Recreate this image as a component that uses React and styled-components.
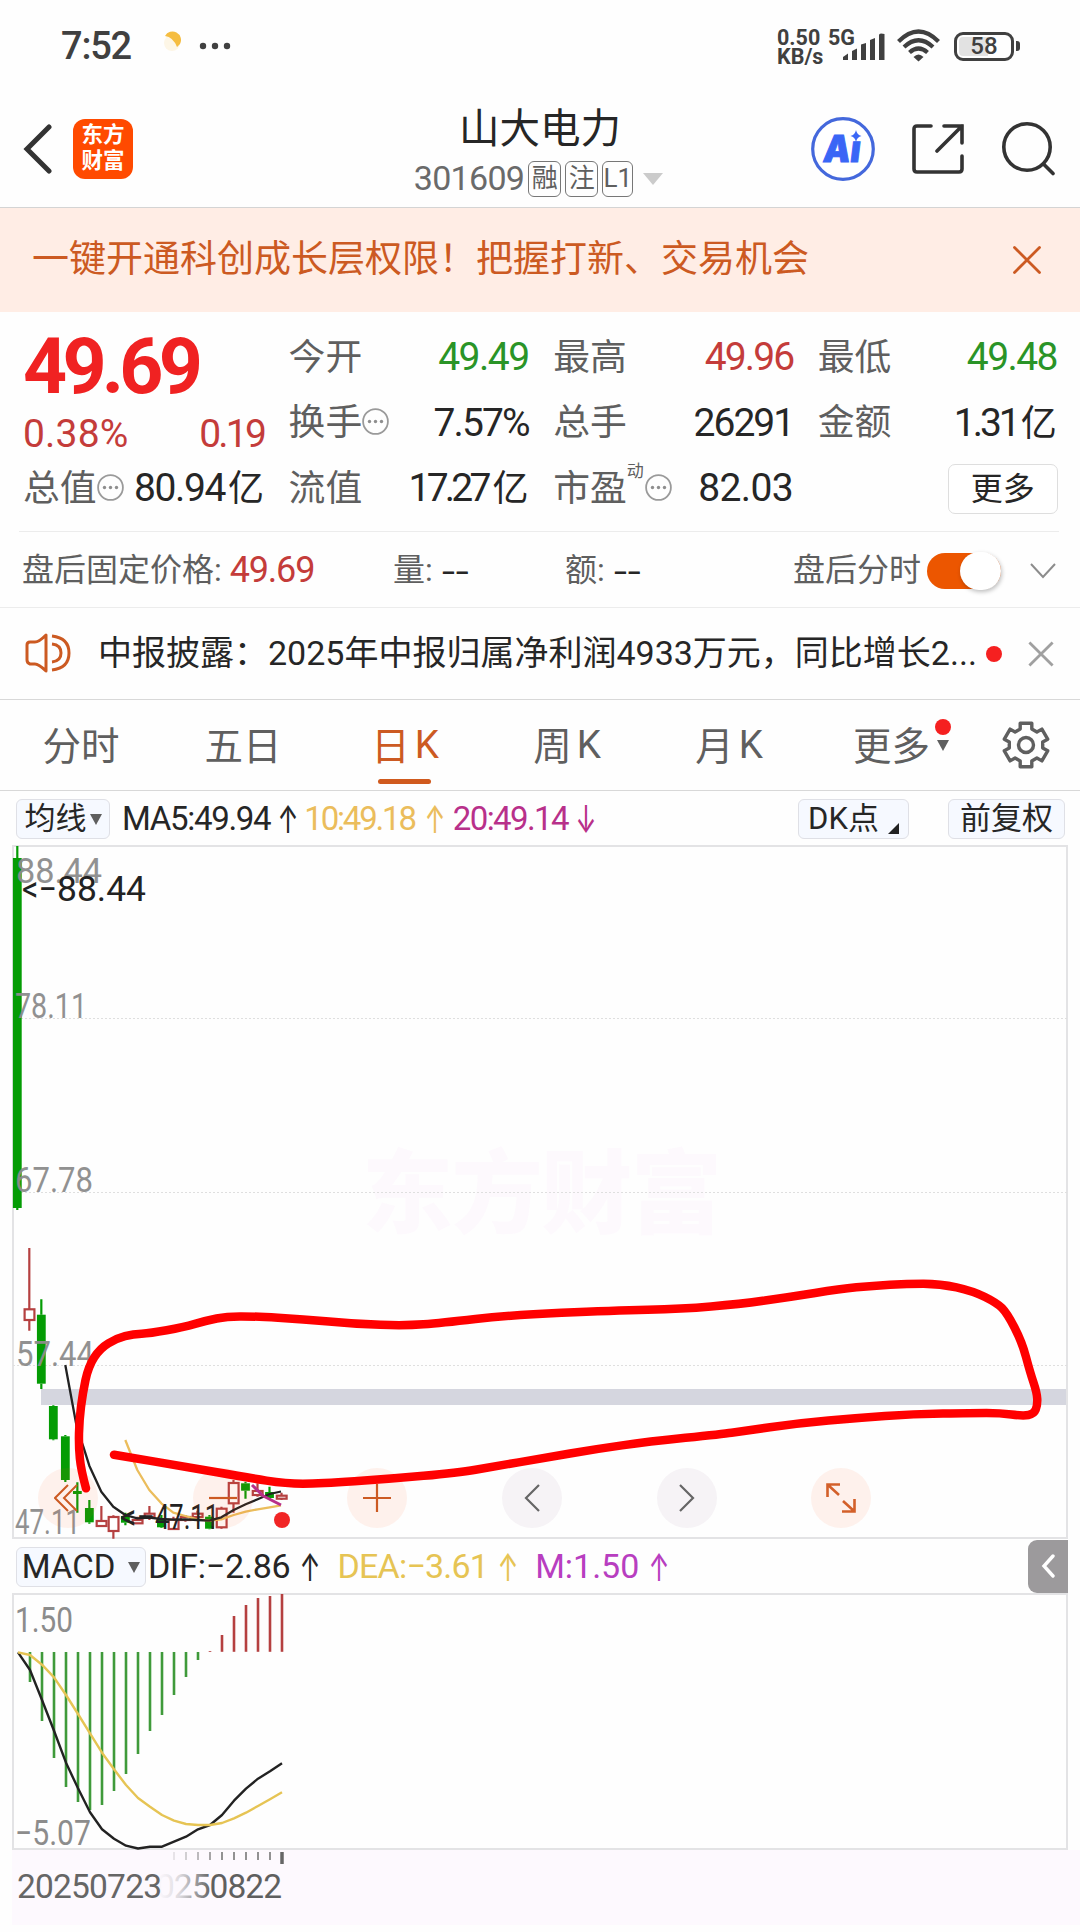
import React from 'react'
import styled, { createGlobalStyle } from 'styled-components';

const GlobalStyle = createGlobalStyle`
  * {
    box-sizing: border-box;
  }
  body {
    margin: 0;
    background: #fefefe;
    color: #262626;
    font-family: Roboto, "Noto Sans CJK SC", sans-serif;
  }
  svg {
    display: block;
    flex: none;
  }
`;

const Page = styled.div`
  width: 1080px;
  height: 1932px;
  overflow: hidden;
  display: flex;
  flex-direction: column;
`;

const Text = styled.span`
  display: block;
  flex: none;
  white-space: nowrap;
  line-height: 1.1;
  font-size: ${(p) => p.$size || 37}px;
  color: ${(p) => p.$color || '#262626'};
  font-weight: ${(p) => p.$weight || 400};
  letter-spacing: ${(p) => p.$ls || 0}px;
  margin-left: ${(p) => p.$ml || 0}px;
`;

/* status bar */

const StatusBar = styled.div`
  flex: none;
  height: 92px;
  padding: 0 60px 0 61px;
  display: flex;
  align-items: center;
`;

const Speed = styled.div`
  margin-left: auto;
  width: 51px;
  font-size: 21.5px;
  line-height: 19px;
  font-weight: 700;
  color: #404040;
  white-space: nowrap;
  padding-top: 1px;
`;

const Signal = styled.div`
  position: relative;
  width: 69px;
  height: 36px;
`;

const Network = styled.span`
  position: absolute;
  left: 0;
  top: 0;
  font-size: 21.5px;
  line-height: 19px;
  font-weight: 700;
  color: #404040;
`;

const Bars = styled.svg`
  position: absolute;
  left: 15px;
  top: 5px;
`;

const Battery = styled.div`
  width: 60px;
  height: 29px;
  margin-left: 14px;
  border: 3px solid #404040;
  border-radius: 9px;
  display: flex;
  align-items: center;
  justify-content: center;
  font-size: 24px;
  font-weight: 500;
  color: #404040;
  background: linear-gradient(90deg, #e2e2e2 58%, #fefefe 58%);
  background-clip: content-box;
  padding: 2px;
`;

const BatteryTip = styled.div`
  width: 4px;
  height: 10px;
  margin-left: 2px;
  border-radius: 0 3px 3px 0;
  background: #404040;
`;

/* header */

const Header = styled.div`
  flex: none;
  height: 116px;
  padding: 0 25px 0 23px;
  border-bottom: 1px solid #d4d4d4;
  display: flex;
  align-items: flex-start;
`;

const Logo = styled.div`
  width: 60px;
  height: 60px;
  margin: 27px 0 0 21px;
  border-radius: 12px;
  background: #ff4a00;
  color: #fff;
  font-size: 21.5px;
  font-weight: 700;
  line-height: 26px;
  text-align: center;
  padding-top: 3px;
`;

const TitleBox = styled.div`
  width: 280px;
  margin-left: 267px;
  display: flex;
  flex-direction: column;
  align-items: center;
  padding-top: 15px;
`;

const CodeRow = styled.div`
  display: flex;
  align-items: center;
  gap: 4px;
  margin-top: 9px;
  margin-left: -3px;
  height: 36px;
`;

const Tag = styled.span`
  width: ${(p) => p.$w || 33}px;
  height: 36px;
  border: 1.5px solid #777;
  border-radius: 6px;
  font-size: 26px;
  line-height: 33px;
  text-align: center;
  color: #5f5f5f;
  display: flex;
  justify-content: center;
`;

const Down = styled.i`
  display: block;
  flex: none;
  border-left: ${(p) => p.$w / 2}px solid transparent;
  border-right: ${(p) => p.$w / 2}px solid transparent;
  border-top: ${(p) => p.$h}px solid ${(p) => p.$color};
  margin-left: ${(p) => p.$ml || 0}px;
`;

const HeaderIcons = styled.div`
  margin-left: auto;
  padding-top: 24px;
  display: flex;
  align-items: center;
`;

/* banner */

const Banner = styled.div`
  flex: none;
  height: 104px;
  padding: 0 39px 0 32px;
  background: #ffede5;
  display: flex;
  align-items: center;
  justify-content: space-between;
`;

/* quote */

const Quote = styled.div`
  flex: none;
  height: 220px;
  margin: 0 21px 0 19px;
  padding: 13px 2px 0 4px;
  border-bottom: 1.5px solid #ececec;
  display: grid;
  grid-template-columns: 241px 240px 240px 239px;
  column-gap: 24.6px;
  grid-template-rows: repeat(3, 65.5px);
`;

const PriceCell = styled.div`
  grid-row: 1 / span 2;
  display: flex;
  flex-direction: column;
`;

const Cell = styled.div`
  display: flex;
  align-items: center;
  justify-content: space-between;
`;

const Label = styled.div`
  display: flex;
  align-items: center;
  font-size: 36.8px;
  line-height: 44px;
  color: #5f5f5f;
  white-space: nowrap;

  svg {
    margin-bottom: 3px;
  }
`;

const Sup = styled.sup`
  font-size: 17px;
  line-height: 17px;
  align-self: flex-start;
  margin: -4px 1px 0 0;
`;

const Unit = styled.span`
  font-size: 36px;
  letter-spacing: 0;
  margin-left: ${(p) => p.$ml || 3}px;
`;

const MoreButton = styled.button`
  width: 110px;
  height: 50px;
  margin: 0 -1px 0 auto;
  padding: 0;
  border: 1.5px solid #dedede;
  border-radius: 7px;
  background: #fff;
  font: 400 32px/44px Roboto, "Noto Sans CJK SC", sans-serif;
  color: #262626;
`;

/* after-hours row */

const AfterRow = styled.div`
  flex: none;
  height: 76px;
  padding: 2px 0 0 22px;
  border-bottom: 1.5px solid #ececec;
  display: grid;
  grid-template-columns: 371px 172px 228px 134px 103px auto;
  align-items: center;
`;

const Pair = styled.div`
  display: flex;
  align-items: center;
`;

const Dashes = styled.span`
  margin-left: 9px;
  font-size: 34px;
  line-height: 36px;
  letter-spacing: 0.5px;
  transform: scaleX(1.38);
  transform-origin: left;
`;

const Toggle = styled.div`
  width: 74px;
  height: 36px;
  border-radius: 18px;
  background: #ec5600;
  display: flex;
  align-items: center;
  justify-content: flex-end;
`;

const Knob = styled.div`
  width: 41px;
  height: 38px;
  border-radius: 20px;
  background: #fff;
  box-shadow: 1px 2px 4px rgba(0, 0, 0, 0.25);
`;

/* news */

const News = styled.div`
  flex: none;
  height: 92px;
  padding: 0 26px 0 25px;
  border-bottom: 1.5px solid #d8d8d8;
  display: flex;
  align-items: center;
`;

const Dot = styled.i`
  display: block;
  flex: none;
  width: 16px;
  height: 16px;
  border-radius: 50%;
  background: #f52020;
`;

/* tabs */

const Tabs = styled.div`
  flex: none;
  height: 91px;
  border-bottom: 1.5px solid #d8d8d8;
  display: grid;
  grid-template-columns: repeat(6, 162px) 108px;
`;

const Tab = styled.div`
  position: relative;
  display: flex;
  align-items: center;
  justify-content: center;
  gap: 5px;
  padding-bottom: 4px;
  font-size: 38.5px;
  color: ${(p) => (p.$on ? '#cc5a22' : '#5f5f5f')};

  &::after {
    content: '';
    display: ${(p) => (p.$on ? 'block' : 'none')};
    position: absolute;
    left: 54px;
    bottom: 6px;
    width: 53px;
    height: 5px;
    border-radius: 3px;
    background: #d05a1e;
  }
`;

const Latin = styled.span`
  padding-top: 3px;
`;

const TabMark = styled.div`
  display: flex;
  flex-direction: column;
  align-items: center;
  gap: 5px;
  margin: -16px -22px 0 0;
`;

/* indicator rows */

const IndicatorRow = styled.div`
  flex: none;
  height: ${(p) => p.$h}px;
  padding: 2px 15px 0 16px;
  display: flex;
  align-items: center;
`;

const Pick = styled.button`
  flex: none;
  width: ${(p) => p.$w}px;
  height: 40px;
  margin: 0 0 0 ${(p) => p.$ml || '0'};
  padding: 0;
  border: 1.5px solid #dfe0e6;
  border-radius: 6px;
  background: #f6f9ff;
  display: flex;
  align-items: center;
  justify-content: center;
  font: 400 ${(p) => p.$size || 31}px/36px Roboto, "Noto Sans CJK SC", sans-serif;
  color: #262626;
`;

const Corner = styled.i`
  display: block;
  border-left: 11px solid transparent;
  border-bottom: 11px solid #222;
  margin: 18px 0 0 9px;
`;

const Arrow = styled.span`
  flex: none;
  width: 18px;
  margin-left: ${(p) => p.$ml || 9}px;
  font-family: Inter, sans-serif;
  font-size: 34px;
  line-height: 36px;
  color: ${(p) => p.$color || '#262626'};
  display: flex;
  justify-content: center;
  transform: scale(0.74, 1.14);
`;

const Drawer = styled.div`
  width: 40px;
  height: 53px;
  margin: -2px -3px 0 auto;
  border-radius: 9px 0 0 9px;
  background: #9c9a9c;
  display: flex;
  align-items: center;
  justify-content: center;
`;

/* charts */

const ChartBox = styled.div`
  flex: none;
  position: relative;
  height: ${(p) => p.$h}px;
`;

const Controls = styled.div`
  position: absolute;
  left: 38px;
  top: 623px;
  display: flex;
  gap: 94.7px;
`;

const Round = styled.div`
  width: 60px;
  height: 60px;
  border-radius: 50%;
  background: ${(p) => (p.$grey ? 'rgba(120, 60, 120, 0.06)' : 'rgba(255, 90, 20, 0.08)')};
  display: flex;
  align-items: center;
  justify-content: center;
`;

const Overlay = styled.svg`
  position: absolute;
  left: 0;
  top: 0;
`;

const GREEN = '#049c04';
const RED = '#b54040';
const ORANGE = '#cc5a22';

// colour, high, body top, body bottom, low
const candles = [
  ['g', 846, 858, 1208, 1210],
  ['r', 1248, 1309.3, 1320, 1330.7],
  ['g', 1299.3, 1314.7, 1383.7, 1389],
  ['g', 1405.3, 1406, 1439.3, 1440.3],
  ['g', 1435, 1436.3, 1480, 1482],
  ['g', 1482.3, 1491, 1494, 1512.7],
  ['g', 1500, 1508, 1522.3, 1523.7],
  ['r', 1506, 1521, 1526, 1526.3],
  ['r', 1515.3, 1517, 1531, 1538.7],
  ['g', 1512.7, 1516, 1522.7, 1525.3],
  ['r', 1516.7, 1520, 1523.3, 1524],
  ['r', 1506, 1513.7, 1517, 1520],
  ['g', 1515, 1518.3, 1527.3, 1528],
  ['r', 1516.7, 1519.7, 1529, 1530],
  ['r', 1515, 1517, 1520, 1521.7],
  ['r', 1510.7, 1513.7, 1517, 1520],
  ['g', 1515, 1516.7, 1528.7, 1529.3],
  ['r', 1506.7, 1508.7, 1527.3, 1528.7],
  ['r', 1480, 1483, 1503.3, 1512.7],
  ['g', 1481.7, 1483.3, 1490.7, 1498.7],
  ['r', 1483.3, 1491, 1495, 1496.7],
  ['g', 1486.7, 1492, 1498, 1499],
  ['r', 1492.7, 1495.7, 1498.3, 1500],
];

const ma5 = '65.3,1365 77.3,1430 83.3,1446.7 89.3,1465.7 101.3,1491.7 113.3,1506.7 125.3,1515 137.3,1518.3 149.3,1517.7 161.3,1519 173.3,1519.7 185.3,1519.3 197.3,1520 209.3,1520.7 221.3,1517.3 233.7,1510 245.7,1504.3 257.7,1499.3 269.7,1494 281,1491.5';
const ma10 = '125.3,1440 137.3,1470 149.3,1490 161.3,1503.3 173.3,1512.7 185.3,1516 197.3,1519.3 209.3,1520.7 221.3,1519.3 233.7,1515 245.7,1511.7 257.7,1509.3 269.7,1507.3 281,1505.3';
const ma20 = '252,1485 263.3,1496 281,1505';

const marker = [
  [86, 1488.3], [81, 1470], [78.7, 1446.7], [79.3, 1420], [82.7, 1393.3], [88.3, 1366.7], [100, 1348.3],
  [116.7, 1338.3], [133.3, 1334], [150, 1333.3], [183.3, 1327.3], [206.7, 1320.5], [226.7, 1316.5], [253, 1316.3],
  [303, 1319], [355, 1324], [406, 1325.7], [441, 1323], [510, 1315], [613, 1310.7], [682, 1309], [740, 1304],
  [790, 1297], [840, 1289], [873, 1285.7], [907, 1283.7], [940, 1283.7], [973, 1291], [997, 1303], [1007, 1313],
  [1022, 1342], [1030, 1372], [1037, 1393], [1037.5, 1405], [1034, 1414], [1023, 1416], [1000, 1413],
  [973, 1413], [913, 1414], [857, 1418], [800, 1423], [740, 1431.5], [723, 1434], [648, 1441.7], [596, 1449],
  [544, 1458], [493, 1466.7], [458, 1472.7], [389, 1479], [320, 1483.7], [286, 1483.7], [247, 1477.5],
  [187, 1467], [114, 1454.7],
];

const macdEnds = [
  1682, 1721, 1758, 1787, 1802, 1810, 1805, 1791, 1774, 1754, 1731, 1715, 1695, 1677, 1660,
  1651, 1635, 1616, 1605, 1598, 1596, 1594,
];
const dif = [1652.3, 1670, 1700, 1730.7, 1762.7, 1788.3, 1812.3, 1829.3, 1838.7, 1845.7, 1848.5, 1846.7, 1846.7, 1841.7, 1836.7, 1829.3, 1825, 1815, 1800.7, 1788.7, 1778.7, 1771.3, 1763.3];
const dea = [1652.3, 1655, 1664.7, 1677.3, 1695, 1714, 1733.3, 1752.7, 1769.3, 1785, 1798, 1806.7, 1815, 1820.7, 1824, 1825, 1825, 1823, 1818.3, 1812.7, 1806, 1799.3, 1792.3];

const toLine = (ys) => ys.map((y, i) => `${18 + i * 12},${y}`).join(' ');

// quadratic segments through the midpoints keep the hand stroke smooth
const smooth = (pts) => {
  let d = `M${pts[0]}`;
  for (let i = 1; i < pts.length - 1; i++) {
    const mx = (pts[i][0] + pts[i + 1][0]) / 2;
    const my = (pts[i][1] + pts[i + 1][1]) / 2;
    d += ` Q${pts[i]} ${mx},${my}`;
  }
  return d + ` L${pts[pts.length - 1]}`;
};

const gearPath = () => {
  const pts = [];
  for (let k = 0; k < 6; k++) {
    [[-20, 17], [-15, 22.5], [15, 22.5], [20, 17]].forEach(([a, r]) => {
      const t = ((k * 60 - 90 + a) * Math.PI) / 180;
      pts.push(`${(25 + r * Math.cos(t)).toFixed(1)},${(25 + r * Math.sin(t)).toFixed(1)}`);
    });
  }
  return `M${pts.join('L')}Z`;
};

const Info = () => (
  <svg width="27" height="27" viewBox="0 0 27 27" fill="none">
    <circle cx="13.5" cy="13.5" r="12.4" stroke="#9a9a9a" strokeWidth="1.8" />
    <g fill="#8e8e8e">
      <circle cx="7.5" cy="13.5" r="1.7" />
      <circle cx="13.5" cy="13.5" r="1.7" />
      <circle cx="19.5" cy="13.5" r="1.7" />
    </g>
  </svg>
);

const Cross = ({ size, color, width }) => (
  <svg width={size} height={size} viewBox="0 0 28 28" fill="none" stroke={color} strokeWidth={width} strokeLinecap="round">
    <path d="M1.5 1.5L26.5 26.5M26.5 1.5L1.5 26.5" />
  </svg>
);

const Status = () => (
  <StatusBar>
    <Text $size={38} $color="#404040" $weight={500} $ls={-1.2} style={{ paddingTop: 2 }}>7:52</Text>
    <svg width="70" height="30" viewBox="0 0 70 30" style={{ marginLeft: 31 }}>
      <circle cx="10" cy="12" r="8" fill="#fdf6e6" />
      <path d="M3 5A8.5 8.5 0 0 1 18 13L15 16Q11 6 3 5Z" fill="#f5bd41" />
      <g fill="#404040">
        <circle cx="41" cy="15" r="3.2" />
        <circle cx="53" cy="15" r="3.2" />
        <circle cx="65" cy="15" r="3.2" />
      </g>
    </svg>
    <Speed>0.50<br />KB/s</Speed>
    <Signal>
      <Network>5G</Network>
      <Bars width="42" height="28" fill="#404040">
        <path d="M0 27V24L5 20.5V27Z" />
        <path d="M9 27V18L14 15.5V27Z" />
        <path d="M18 27V11.5L23 10V27Z" />
        <path d="M27 27V7L32 5V27Z" />
        <path d="M36 27V2Q36 .5 38 .5T41.5 1V27Z" />
      </Bars>
    </Signal>
    <svg width="43" height="34" viewBox="0 0 43 34" fill="none" stroke="#404040" strokeWidth="4.2">
      <path d="M1.5 12.5Q21.5 -7.5 41.5 12.5" />
      <path d="M7 18Q21.5 4.5 36 18" />
      <path d="M12.5 23.5Q21.5 15.5 30.5 23.5" />
      <path d="M16.5 28Q21.5 23 26.5 28L21.5 32.5Z" fill="#404040" stroke="none" />
    </svg>
    <Battery>58</Battery>
    <BatteryTip />
  </StatusBar>
);

const TopHeader = () => (
  <Header>
    <svg width="29" height="50" viewBox="0 0 29 50" fill="none" stroke="#333" strokeWidth="5" strokeLinecap="round" style={{ marginTop: 32 }}>
      <path d="M26 3L4 25L26 47" strokeLinejoin="miter" />
    </svg>
    <Logo>东方<br />财富</Logo>
    <TitleBox>
      <Text $size={40.5}>山大电力</Text>
      <CodeRow>
        <Text $size={34} $color="#6a6a6a" $ls={-0.7}>301609</Text>
        <Tag>融</Tag>
        <Tag>注</Tag>
        <Tag $w={31}>L1</Tag>
        <Down $w={20} $h={12} $color="#cbcbcb" $ml={6} />
      </CodeRow>
    </TitleBox>
    <HeaderIcons>
      <svg width="66" height="66" viewBox="0 0 66 66">
        <circle cx="33" cy="33" r="30.3" fill="#fff" stroke="#4468dc" strokeWidth="3.2" />
        <text x="18" y="46" transform="skewX(-7)" fontFamily="Inter" fontSize="37" fontWeight="900" fill="#3a66f6" stroke="#3a66f6" textLength="37" lengthAdjust="spacingAndGlyphs">Aı</text>
        <path d="M46 14Q47 19 51.5 20Q47 21 46 26Q45 21 40.5 20Q45 19 46 14Z" fill="#3a66f6" />
      </svg>
      <svg width="52" height="52" viewBox="0 0 52 52" fill="none" stroke="#333" strokeWidth="3.6" strokeLinecap="round" style={{ marginLeft: 36 }}>
        <path d="M19 3H5Q2 3 2 6V46Q2 49 5 49H47Q50 49 50 46V33" />
        <path d="M32 3H50V20M50 3L25 28" />
      </svg>
      <svg width="54" height="54" viewBox="0 0 54 54" fill="none" stroke="#333" strokeWidth="3.6" strokeLinecap="round" style={{ marginLeft: 37 }}>
        <circle cx="26" cy="25" r="23.2" />
        <path d="M42.5 42L52 51.5" />
      </svg>
    </HeaderIcons>
  </Header>
);

const rows = [
  { label: '今开', value: '49.49', color: '#2a9427', ls: -1.5 },
  { label: '最高', value: '49.96', color: '#c43c3a', ls: -1.9 },
  { label: '最低', value: '49.48', color: '#2a9427', ls: -1.6 },
  { label: '换手', value: '7.57%', ls: -1.9, info: true },
  { label: '总手', value: '26291', ls: -2 },
  { label: '金额', value: '1.31', unit: '亿', ls: -3 },
  { label: '总值', value: '80.94', unit: '亿', ls: -1.4, info: true },
  { label: '流值', value: '17.27', unit: '亿', ls: -3.8, gap: 5 },
];

const QuotePanel = () => (
  <Quote>
    <PriceCell>
      <Text $size={77} $weight={700} $color="#f02222" $ls={-4.8}>49.69</Text>
      <Pair style={{ justifyContent: 'space-between', marginTop: 3 }}>
        <Text $size={39} $color="#c43c3a" $ls={0.2}>0.38%</Text>
        <Text $size={39} $color="#c43c3a" $ls={-2.8}>0.19</Text>
      </Pair>
    </PriceCell>
    {rows.map((r) => (
      <Cell key={r.label}>
        <Label>{r.label}{r.info && <Info />}</Label>
        <Text $size={39} $color={r.color} $ls={r.ls}>
          {r.value}{r.unit && <Unit $ml={r.gap}>{r.unit}</Unit>}
        </Text>
      </Cell>
    ))}
    <Cell>
      <Label>市盈<Sup>动</Sup><Info /></Label>
      <Text $size={39} $ls={-0.6}>82.03</Text>
    </Cell>
    <Cell><MoreButton>更多</MoreButton></Cell>
  </Quote>
);

const AfterHours = () => (
  <AfterRow>
    <Pair>
      <Text $size={32} $color="#5f5f5f">盘后固定价格:</Text>
      <Text $size={36} $color="#c43c3a" $ls={-1.2} $ml={8}>49.69</Text>
    </Pair>
    <Pair>
      <Text $size={32} $color="#5f5f5f">量:</Text>
      <Dashes>--</Dashes>
    </Pair>
    <Pair>
      <Text $size={32} $color="#5f5f5f">额:</Text>
      <Dashes>--</Dashes>
    </Pair>
    <Text $size={32} $color="#5f5f5f">盘后分时</Text>
    <Toggle><Knob /></Toggle>
    <svg width="26" height="18" viewBox="0 0 26 18" fill="none" stroke="#8c8c8c" strokeWidth="2">
      <path d="M1 2L13 15L25 2" />
    </svg>
  </AfterRow>
);

const NewsRow = () => (
  <News>
    <svg width="46" height="40" viewBox="0 0 46 40" fill="none" stroke={ORANGE} strokeWidth="3" strokeLinejoin="round" style={{ marginBottom: 2 }}>
      <path d="M21 2V38Q13 30 9 31H5Q2 30 2 27V12Q2 9 5 9H9Q13 10 21 2Z" />
      <path d="M27 11Q36 12 36 20Q36 28 27 29M27 3Q44 5 44 20Q44 35 27 37" />
    </svg>
    <Text $size={34} $ml={27}>中报披露：2025年中报归属净利润4933万元，同比增长2...</Text>
    <Dot style={{ marginLeft: 9 }} />
    <svg width="26" height="26" viewBox="0 0 28 28" fill="none" stroke="#a0a0a0" strokeWidth="3" style={{ marginLeft: 'auto' }}>
      <path d="M1.5 1.5L26.5 26.5M26.5 1.5L1.5 26.5" />
    </svg>
  </News>
);

const TabRow = () => (
  <Tabs>
    <Tab>分时</Tab>
    <Tab>五日</Tab>
    <Tab $on><span>日</span><Latin>K</Latin></Tab>
    <Tab><span>周</span><Latin>K</Latin></Tab>
    <Tab><span>月</span><Latin>K</Latin></Tab>
    <Tab>
      更多
      <TabMark>
        <Dot />
        <Down $w={13} $h={11} $color="#5f5f5f" />
      </TabMark>
    </Tab>
    <Tab>
      <svg width="50" height="50" viewBox="0 0 50 50" fill="none" stroke="#5f5f5f" strokeWidth="3.4" strokeLinejoin="round" style={{ marginTop: 4 }}>
        <path d={gearPath()} />
        <circle cx="25" cy="25" r="7.5" />
      </svg>
    </Tab>
  </Tabs>
);

const ScaleText = ({ x, y, w, dark, children }) => (
  <text x={x} y={y} fontSize="35" fill={dark ? '#222' : '#8c8c8c'} textLength={w} lengthAdjust="spacingAndGlyphs">{children}</text>
);

const Candle = ({ x, data }) => {
  const [kind, high, top, bottom, low] = data;
  const c = kind === 'g' ? GREEN : RED;
  return (
    <g stroke={c} strokeWidth="2.2">
      <path d={`M${x} ${high}V${top}M${x} ${bottom}V${low}`} />
      {kind === 'g'
        ? <rect x={x - 4.4} y={top} width="8.8" height={bottom - top} fill={c} stroke="none" />
        : <rect x={x - 4.7} y={top} width="9.8" height={Math.max(bottom - top, 3)} fill="#fff" />}
    </g>
  );
};

const KChart = () => (
  <ChartBox $h={694}>
    <svg width="1080" height="694" viewBox="0 845 1080 694">
      <text x="362" y="1226" fontSize="91" fontWeight="900" fill="#fdf9fd" textLength="360">东方财富</text>
      <path d="M13 1538V846H1067V1538Z" fill="none" stroke="#e3e3e5" strokeWidth="2" />
      <path d="M13 1018.5H1067M13 1192.5H1067M13 1365.5H1067" stroke="#dfdfdf" strokeWidth="1" strokeDasharray="2 2" />
      <rect x="41" y="1389" width="1025" height="16" fill="#d5d6df" />
      {candles.map((c, i) => <Candle key={i} x={17.3 + i * 12.01} data={c} />)}
      <g opacity="0.95">
        <ScaleText x={16} y={883} w={86}>88.44</ScaleText>
        <ScaleText x={15} y={1018} w={72}>78.11</ScaleText>
        <ScaleText x={15} y={1192} w={78}>67.78</ScaleText>
        <ScaleText x={16} y={1365.5} w={78}>57.44</ScaleText>
        <ScaleText x={15} y={1534} w={65}>47.11</ScaleText>
      </g>
      <g fill="none" strokeWidth="2.3" strokeLinejoin="round">
        <polyline points={ma10} stroke="#ebbd5c" />
        <polyline points={ma5} stroke="#222" />
        <polyline points={ma20} stroke="#b8308a" strokeWidth="3" />
      </g>
      <ScaleText x={22} y={901} w={35} dark>&lt;−</ScaleText>
      <ScaleText x={57} y={901} w={89} dark>88.44</ScaleText>
      <ScaleText x={120} y={1529} w={35} dark>&lt;−</ScaleText>
      <ScaleText x={155} y={1529} w={64} dark>47.11</ScaleText>
      <circle cx="282" cy="1520" r="8" fill="#f12525" />
    </svg>
    <Controls>
      <Round>
        <svg width="28" height="28" viewBox="0 0 28 28" fill="none" stroke={ORANGE} strokeWidth="2">
          <path d="M14 1L1 14L14 27M23 1L10 14L23 27" />
        </svg>
      </Round>
      <Round>
        <svg width="28" height="28" viewBox="0 0 28 28" stroke={ORANGE} strokeWidth="2.2"><path d="M0 14H28" /></svg>
      </Round>
      <Round>
        <svg width="28" height="28" viewBox="0 0 28 28" stroke={ORANGE} strokeWidth="2.2"><path d="M0 14H28M14 0V28" /></svg>
      </Round>
      <Round $grey>
        <svg width="16" height="28" viewBox="0 0 16 28" fill="none" stroke="#666" strokeWidth="2.2"><path d="M15 1L2 14L15 27" /></svg>
      </Round>
      <Round $grey>
        <svg width="16" height="28" viewBox="0 0 16 28" fill="none" stroke="#666" strokeWidth="2.2"><path d="M1 1L14 14L1 27" /></svg>
      </Round>
      <Round>
        <svg width="30" height="30" viewBox="0 0 30 30" fill="none" stroke="#d3602a" strokeWidth="2.6">
          <path d="M1.5 14V1.5H14M1.5 1.5L13 12M28.5 16V28.5H16M28.5 28.5L17 18" />
        </svg>
      </Round>
    </Controls>
    <Overlay width="1080" height="694" viewBox="0 845 1080 694">
      <path d={smooth(marker)} fill="none" stroke="#ff0000" strokeWidth="8.5" strokeLinecap="round" strokeLinejoin="round" />
    </Overlay>
  </ChartBox>
);

const MacdChart = () => (
  <ChartBox $h={339}>
    <svg width="1080" height="339" viewBox="0 1593 1080 339">
      <defs>
        <linearGradient id="fade" gradientUnits="userSpaceOnUse" x1="158" x2="212" y1="0" y2="0">
          <stop offset="0" stopColor="#5f5f5f" stopOpacity="0" />
          <stop offset="0.4" stopColor="#5f5f5f" stopOpacity="0.2" />
          <stop offset="1" stopColor="#5f5f5f" />
        </linearGradient>
      </defs>
      <rect x="12" y="1850" width="1068" height="75" fill="#fdf9fe" />
      <path d="M13 1849V1594H1067V1849Z" fill="none" stroke="#e3e3e5" strokeWidth="2" />
      {macdEnds.map((y, i) => (
        <path key={i} d={`M${30 + i * 12} ${i < 15 ? 1652 : 1651.8}V${y}`} stroke={i < 15 ? '#3f9a3a' : RED} strokeWidth="2.6" />
      ))}
      <ScaleText x={15} y={1632} w={58}>1.50</ScaleText>
      <ScaleText x={15} y={1845} w={76}>−5.07</ScaleText>
      <g fill="none" strokeWidth="2.4" strokeLinejoin="round">
        <polyline points={toLine(dif)} stroke="#222" />
        <polyline points={toLine(dea)} stroke="#e6c454" />
      </g>
      {[...Array(10)].map((_, i) => (
        <path key={i} d={`M${174 + i * 12} 1852V1860`} stroke="#777" strokeWidth="1.6" opacity={Math.min(1, 0.2 + i * 0.2)} />
      ))}
      <path d="M282 1852V1864" stroke="#666" strokeWidth="3.5" />
      <text x="138" y="1898" fontSize="33.5" fill="url(#fade)" textLength="144">20250822</text>
      <text x="17" y="1898" fontSize="33.5" fill="#666" textLength="145">20250723</text>
    </svg>
  </ChartBox>
);

const App = () => {
  return (
    <>
      <GlobalStyle />
      <Page>
        <Status />
        <TopHeader />
        <Banner>
          <Text $size={37} $color={ORANGE}>一键开通科创成长层权限！把握打新、交易机会</Text>
          <Cross size={28} color={ORANGE} width={2.8} />
        </Banner>
        <QuotePanel />
        <AfterHours />
        <NewsRow />
        <TabRow />
        <IndicatorRow $h={54}>
          <Pick $w={94}>均线<Down $w={13} $h={11} $color="#5f5f5f" $ml={3} /></Pick>
          <Text $size={33} $ml={12} $ls={-1.3}>MA5:49.94</Text>
          <Arrow>↑</Arrow>
          <Text $size={33} $ml={7} $ls={-2.2} $color="#ebbd5c">10:49.18</Text>
          <Arrow $color="#ebbd5c" $ml={11}>↑</Arrow>
          <Text $size={33} $ml={9} $ls={-1.6} $color="#b8308a">20:49.14</Text>
          <Arrow $color="#b8308a">↓</Arrow>
          <Pick $w={111} $ml="auto">DK点<Corner /></Pick>
          <Pick $w={117} $ml="39px">前复权</Pick>
        </IndicatorRow>
        <KChart />
        <IndicatorRow $h={54}>
          <Pick $w={130} $size={33}>MACD<Down $w={13} $h={11} $color="#5f5f5f" $ml={13} /></Pick>
          <Text $size={34} $ml={2} $ls={-0.2}>DIF:−2.86</Text>
          <Arrow $ml={10}>↑</Arrow>
          <Text $size={34} $ml={19} $ls={-0.8} $color="#e6c454">DEA:−3.61</Text>
          <Arrow $color="#e6c454" $ml={11}>↑</Arrow>
          <Text $size={34} $ml={18} $ls={0} $color="#b83ec0">M:1.50</Text>
          <Arrow $color="#b83ec0" $ml={11}>↑</Arrow>
          <Drawer>
            <svg width="14" height="24" viewBox="0 0 14 24" fill="none" stroke="#fff" strokeWidth="3.4" strokeLinecap="round">
              <path d="M12 2L3 12L12 22" />
            </svg>
          </Drawer>
        </IndicatorRow>
        <MacdChart />
      </Page>
    </>
  )
}

export default App;
